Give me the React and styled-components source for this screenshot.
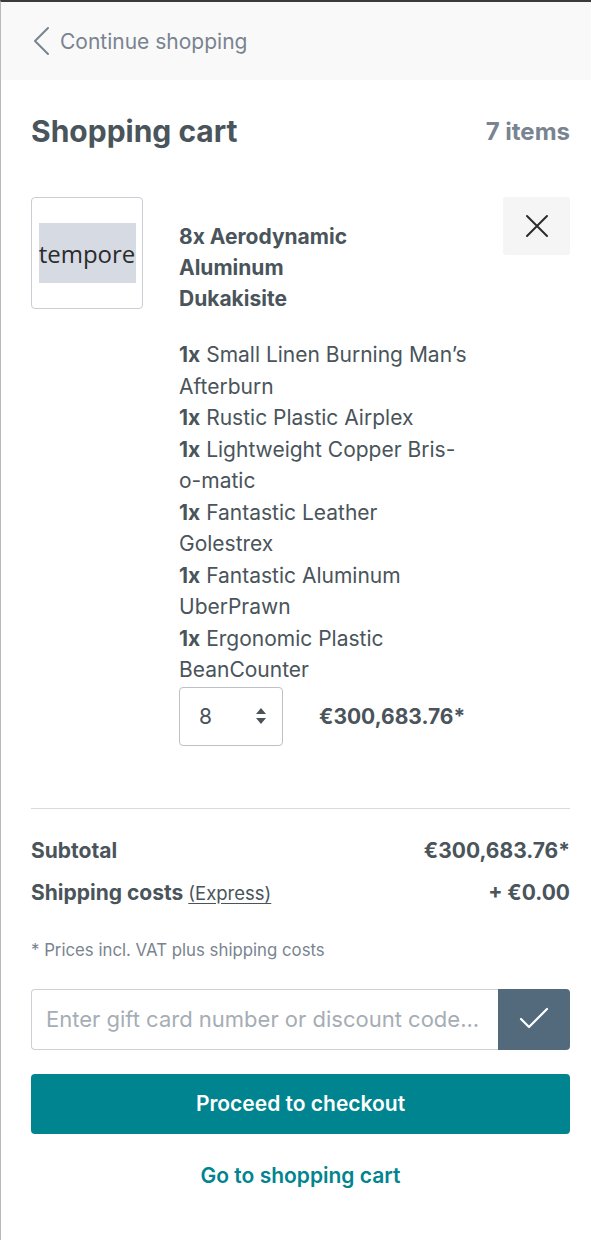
import { createGlobalStyle, styled } from "styled-components";

const GlobalStyle = createGlobalStyle`
  * { box-sizing: border-box; }
  body {
    margin: 0;
    background: #fff;
    font-family: Inter, "Noto Sans", sans-serif;
    color: #4a545b;
  }
`;

const Panel = styled.div`
  min-height: 1240px;
  border-top: 2px solid #3b3b3b;
  border-left: 1px solid #b9b9b9;
  background: #fff;
`;

const Header = styled.div`
  height: 78px;
  background: #f9f9f9;
  display: flex;
  align-items: center;
  padding-left: 31px;
  gap: 10px;
  color: #798490;
  font-size: 21px;
`;

const Body = styled.div`
  padding: 0 21px 40px 30px;
`;

const TitleRow = styled.div`
  display: flex;
  justify-content: space-between;
  align-items: center;
  height: 102px;
`;

const Title = styled.h2`
  margin: 0;
  font-size: 30px;
  font-weight: 700;
  color: #4a545b;
`;

const Count = styled.span`
  font-size: 24px;
  font-weight: 700;
  color: #798490;
`;

const Item = styled.div`
  display: grid;
  grid-template-columns: 112px minmax(0, 1fr) 67px;
  column-gap: 36px;
  margin-top: 15px;
  padding-bottom: 62px;
  border-bottom: 1px solid #d6dbe0;
`;

const Thumb = styled.div`
  width: 112px;
  height: 112px;
  border: 1px solid #c9ced3;
  border-radius: 4px;
  display: flex;
  align-items: center;
  justify-content: center;
`;

const Alt = styled.span`
  width: 97px;
  height: 60px;
  background: #d6dae3;
  display: flex;
  align-items: center;
  justify-content: center;
  font-family: "Open Sans", "Noto Sans", sans-serif;
  font-size: 24px;
  color: #2b2b2b;
  white-space: nowrap;
`;

const Info = styled.div`
  display: flex;
  flex-direction: column;
`;

const Name = styled.div`
  margin-top: 24px;
  max-width: 190px;
  font-size: 21px;
  font-weight: 700;
  line-height: 31px;
`;

const Children = styled.ul`
  list-style: none;
  margin: 25px 0 0;
  padding: 0;
  width: 292px;
  font-size: 21px;
  line-height: 31.5px;
`;

const Child = styled.li`
  b { font-weight: 700; }
`;

const Remove = styled.button`
  width: 67px;
  height: 58px;
  border: 0;
  background: #f5f5f5;
  border-radius: 3px;
  display: flex;
  align-items: center;
  justify-content: center;
  padding: 0;
  cursor: pointer;
`;

const QtyRow = styled.div`
  display: flex;
  align-items: center;
  gap: 36px;
  margin-top: 1px;
`;

const Select = styled.div`
  width: 104px;
  height: 59px;
  border: 1px solid #bcc1c7;
  border-radius: 4px;
  display: flex;
  align-items: center;
  justify-content: space-between;
  padding: 0 15px 0 19px;
  font-size: 21px;
`;

const Price = styled.span`
  font-size: 21px;
  font-weight: 700;
`;

const Summary = styled.div`
  padding-top: 26px;
  display: flex;
  flex-direction: column;
  gap: 11px;
`;

const SumRow = styled.div`
  display: flex;
  justify-content: space-between;
  font-size: 21px;
  font-weight: 700;
  line-height: 31px;
`;

const Express = styled.span`
  font-weight: 400;
  font-size: 18.5px;
  text-decoration: underline;
  text-underline-offset: 3px;
`;

const Note = styled.p`
  margin: 31px 0 0;
  font-size: 16.8px;
  color: #798490;
`;

const Voucher = styled.div`
  display: flex;
  height: 61px;
  margin-top: 29px;
`;

const Input = styled.input`
  flex: 1;
  min-width: 0;
  border: 1px solid #ccd1d6;
  border-right: 0;
  border-radius: 4px 0 0 4px;
  padding: 0 10px 0 14px;
  font-family: inherit;
  font-size: 22px;
  color: #4a545b;
  &::placeholder { color: #a6adb4; }
`;

const Apply = styled.button`
  width: 72px;
  border: 0;
  border-radius: 0 4px 4px 0;
  background: #526a7c;
  display: flex;
  align-items: center;
  justify-content: center;
`;

const Checkout = styled.button`
  width: 100%;
  height: 60px;
  margin-top: 24px;
  border: 0;
  border-radius: 4px;
  background: #008490;
  color: #fff;
  font-family: inherit;
  font-size: 21px;
  font-weight: 600;
`;

const CartLink = styled.a`
  display: block;
  margin-top: 29px;
  text-align: center;
  color: #008490;
  font-size: 21px;
  font-weight: 600;
  text-decoration: none;
`;

const children = [
  "Small Linen Burning Man’s Afterburn",
  "Rustic Plastic Airplex",
  "Lightweight Copper Bris-o-matic",
  "Fantastic Leather Golestrex",
  "Fantastic Aluminum UberPrawn",
  "Ergonomic Plastic BeanCounter",
];

export default function App() {
  return (
    <>
      <GlobalStyle />
      <Panel>
        <Header>
          <svg width="18" height="30" viewBox="0 0 18 30" fill="none">
            <path d="M16 2 L3 15 L16 28" stroke="#798490" strokeWidth="2" strokeLinecap="round" strokeLinejoin="round" />
          </svg>
          Continue shopping
        </Header>
        <Body>
          <TitleRow>
            <Title>Shopping cart</Title>
            <Count>7 items</Count>
          </TitleRow>
          <Item>
            <Thumb>
              <Alt>tempore</Alt>
            </Thumb>
            <Info>
              <Name>8x Aerodynamic Aluminum Dukakisite</Name>
              <Children>
                {children.map((c) => (
                  <Child key={c}>
                    <b>1x</b> {c}
                  </Child>
                ))}
              </Children>
              <QtyRow>
                <Select>
                  8
                  <svg width="12" height="18" viewBox="0 0 12 18">
                    <path d="M6 1 L11 7 H1 Z M6 17 L11 11 H1 Z" fill="#4a545b" />
                  </svg>
                </Select>
                <Price>€300,683.76*</Price>
              </QtyRow>
            </Info>
            <Remove aria-label="Remove">
              <svg width="24" height="24" viewBox="0 0 24 24">
                <path d="M2 2 L22 22 M22 2 L2 22" stroke="#2b2b2b" strokeWidth="2" strokeLinecap="round" />
              </svg>
            </Remove>
          </Item>
          <Summary>
            <SumRow>
              <span>Subtotal</span>
              <span>€300,683.76*</span>
            </SumRow>
            <SumRow>
              <span>
                Shipping costs <Express>(Express)</Express>
              </span>
              <span>+ €0.00</span>
            </SumRow>
          </Summary>
          <Note>* Prices incl. VAT plus shipping costs</Note>
          <Voucher>
            <Input placeholder="Enter gift card number or discount code..." />
            <Apply aria-label="Apply">
              <svg width="30" height="24" viewBox="0 0 30 24">
                <path d="M2 12 L10 20 L28 2" stroke="#fff" strokeWidth="2.2" fill="none" strokeLinecap="round" strokeLinejoin="round" />
              </svg>
            </Apply>
          </Voucher>
          <Checkout>Proceed to checkout</Checkout>
          <CartLink href="#">Go to shopping cart</CartLink>
        </Body>
      </Panel>
    </>
  );
}
